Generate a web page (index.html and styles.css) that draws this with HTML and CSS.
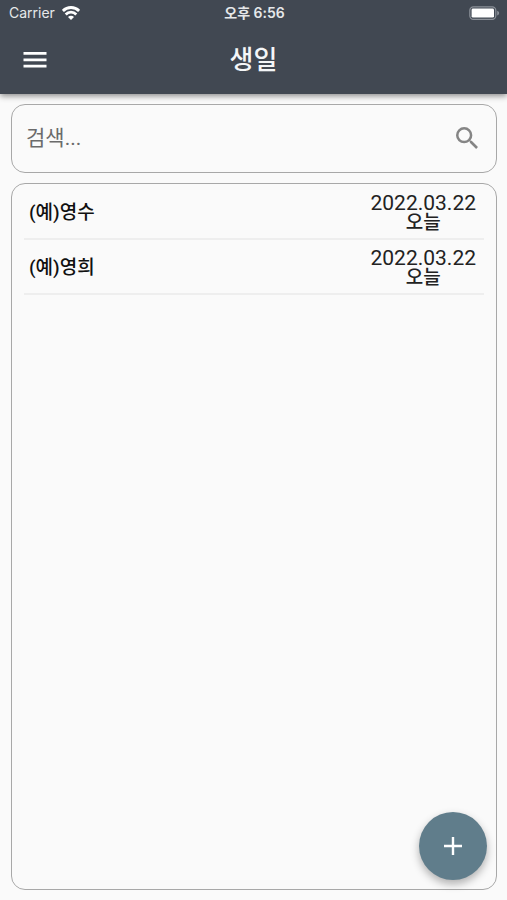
FILE: index.html
```html
<!DOCTYPE html>
<html lang="ko">
<head>
<meta charset="utf-8">
<meta name="viewport" content="width=device-width, initial-scale=1">
<title>생일</title>
<link rel="stylesheet" href="styles.css">
</head>
<body>
<header class="app-header">
  <div class="status-bar">
    <div class="carrier">
      <span>Carrier</span>
      <svg width="18" height="14" viewBox="0 0 18 14" fill="none" stroke="currentColor" stroke-width="2.8" aria-hidden="true">
        <path d="M.9 4.9a11.4 11.4 0 0 1 16.2 0"/>
        <path d="M3.7 8.4a7.5 7.5 0 0 1 10.6 0"/>
        <path d="M9 14 6 11a4.2 4.2 0 0 1 6 0z" fill="currentColor" stroke="none"/>
      </svg>
    </div>
    <div class="clock">오후 6:56</div>
    <div class="battery">
      <svg width="31" height="14" viewBox="0 0 31 14" aria-hidden="true">
        <rect x=".8" y=".8" width="26" height="12.6" rx="3.6" fill="none" stroke="#8b9098" stroke-width="1.2"/>
        <rect x="2.6" y="2.6" width="22.4" height="9" rx="1.4" fill="#fff"/>
        <path d="M28.2 4.8c2.6.8 2.6 3.8 0 4.6z" fill="#8b9098"/>
      </svg>
    </div>
  </div>
  <div class="toolbar">
    <button class="menu-button" type="button" aria-label="메뉴">
      <svg width="24" height="16" viewBox="0 0 24 16" fill="currentColor" aria-hidden="true">
        <path d="M.5 0h23v2.8H.5zM.5 6.4h23v2.8H.5zM.5 12.8h23v2.8H.5z"/>
      </svg>
    </button>
    <h1 class="title">생일</h1>
  </div>
</header>
<main class="content">
  <form class="search" role="search">
    <input class="search-input" type="text" placeholder="검색..." aria-label="검색">
    <button class="search-button" type="submit" aria-label="검색">
      <svg width="22" height="22" viewBox="3 3 17.5 17.5" fill="currentColor" aria-hidden="true">
        <path d="M15.5 14h-.79l-.28-.27A6.47 6.47 0 0 0 16 9.5 6.5 6.5 0 1 0 9.5 16c1.61 0 3.09-.59 4.23-1.57l.27.28v.79l5 4.99L20.49 19zm-6 0a4.5 4.5 0 1 1 0-9 4.5 4.5 0 0 1 0 9z"/>
      </svg>
    </button>
  </form>
  <ul class="list">
    <li class="row">
      <span class="name">(예)영수</span>
      <div class="when"><time class="date" datetime="2022-03-22">2022.03.22</time><span class="day">오늘</span></div>
    </li>
    <li class="row">
      <span class="name">(예)영희</span>
      <div class="when"><time class="date" datetime="2022-03-22">2022.03.22</time><span class="day">오늘</span></div>
    </li>
  </ul>
</main>
<button class="add-button" type="button" aria-label="추가">
  <svg width="18" height="18" viewBox="0 0 18 18" fill="none" stroke="currentColor" stroke-width="2.4" aria-hidden="true">
    <path d="M9 0v18M0 9h18"/>
  </svg>
</button>
</body>
</html>
```
FILE: styles.css
```css
* {
  box-sizing: border-box;
}

body {
  margin: 0;
  min-height: 100vh;
  display: flex;
  flex-direction: column;
  background: #fafafa;
  color: #222;
  font-family: Roboto, "Noto Sans CJK KR", sans-serif;
}

button {
  display: flex;
  align-items: center;
  justify-content: center;
  border: 0;
  padding: 0;
  background: none;
  color: inherit;
}

svg {
  display: block;
}

.app-header {
  background: #414852;
  color: #fff;
  box-shadow: 0 2px 6px rgba(0, 0, 0, 0.45);
}

.status-bar {
  display: grid;
  grid-template-columns: 1fr auto 1fr;
  align-items: center;
  height: 26px;
  padding: 0 7px 0 9px;
  font-family: Inter, "Noto Sans CJK KR", sans-serif;
  font-size: 14px;
  line-height: 26px;
  color: #e6e8ea;
}

.carrier {
  display: flex;
  align-items: center;
  gap: 7px;
}

.carrier svg {
  color: #fff;
}

.clock {
  font-weight: 600;
}

.battery {
  justify-self: end;
}

.toolbar {
  display: grid;
  grid-template-columns: 70px 1fr 70px;
  align-items: center;
  height: 68px;
}

.menu-button {
  height: 48px;
}

.title {
  margin: 0;
  font-size: 26px;
  line-height: 32px;
  font-weight: 500;
  text-align: center;
  color: #f4f6f8;
}

.content {
  flex: 1;
  display: flex;
  flex-direction: column;
  gap: 10px;
  padding: 10px 10px 10px 11px;
}

.search,
.list {
  border: 1px solid #a8a8a8;
  border-radius: 14px;
}

.search {
  display: flex;
  align-items: center;
  height: 69px;
  padding: 0 18px 2px 14px;
}

.search-input {
  flex: 1;
  min-width: 0;
  border: 0;
  padding: 0;
  outline: 0;
  background: none;
  font: inherit;
  font-size: 21px;
  line-height: 32px;
}

.search-input::placeholder {
  color: #6b6b6b;
  opacity: 1;
}

.search-button {
  color: #858585;
}

.list {
  flex: 1;
  margin: 0;
  padding: 1px 12px;
  list-style: none;
}

.row {
  display: flex;
  align-items: center;
  justify-content: space-between;
  height: 55px;
  padding: 2px 8px 0 5px;
  border-bottom: 2px solid #eee;
}

.name {
  font-size: 19px;
  line-height: 28px;
  font-weight: 500;
  color: #111;
}

.when {
  display: flex;
  flex-direction: column;
  align-items: center;
  line-height: 20px;
}

.date {
  font-size: 21px;
}

.day {
  font-size: 19px;
  font-weight: 500;
}

.add-button {
  position: fixed;
  right: 20px;
  bottom: 20px;
  width: 68px;
  height: 68px;
  border-radius: 50%;
  background: #607d8b;
  color: #fff;
  box-shadow: 0 4px 8px rgba(0, 0, 0, 0.3);
}
```
